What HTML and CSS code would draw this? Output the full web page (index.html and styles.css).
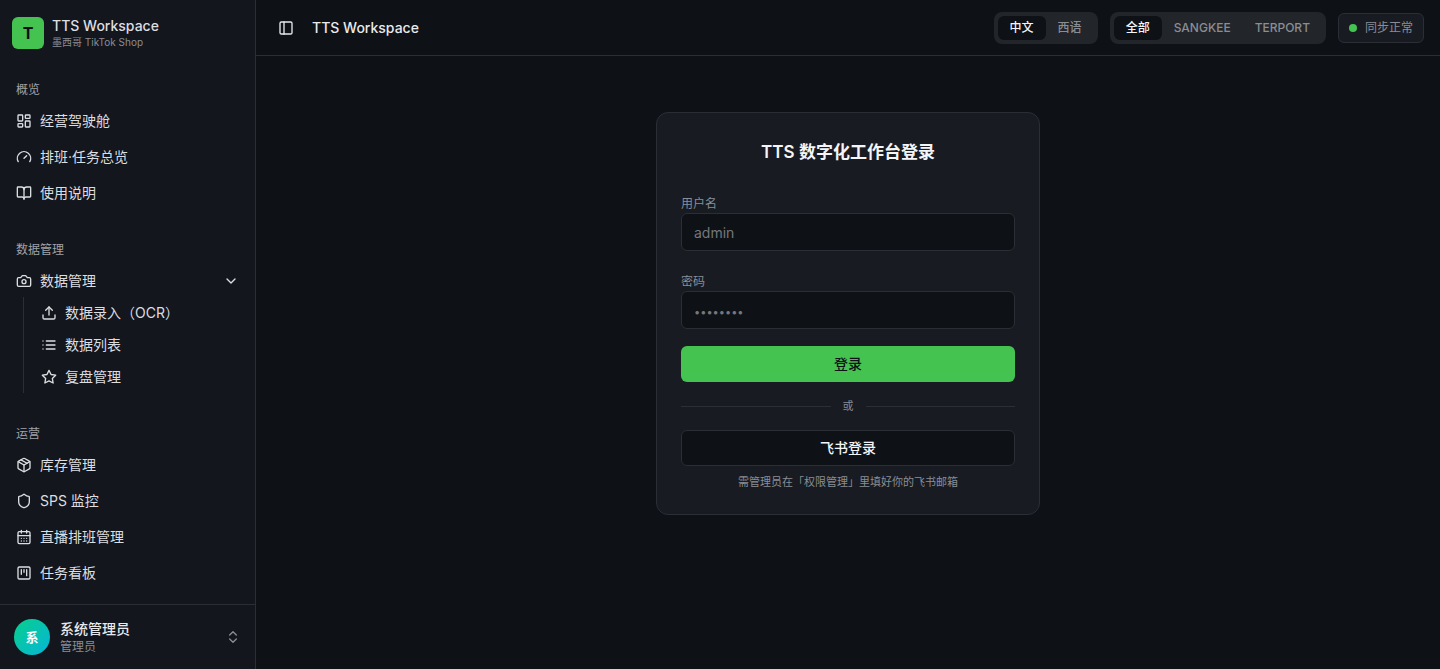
FILE: index.html
```html
<!DOCTYPE html>
<html lang="zh-CN">
<head>
    <meta charset="UTF-8">
    <meta name="viewport" content="width=device-width, initial-scale=1.0">
    <title>TTS Workspace</title>
    <link rel="stylesheet" href="styles.css">
</head>
<body>
    <!-- sidebar -->
    <aside class="sidebar">
        <div class="brand">
            <div class="brand-logo">T</div>
            <div>
                <div class="brand-name">TTS Workspace</div>
                <div class="brand-sub">墨西哥 TikTok Shop</div>
            </div>
        </div>

        <nav class="nav">
            <div class="nav-group">
                <div class="nav-label">概览</div>
                <a class="nav-item" href="#">
                    <svg class="icon" viewBox="0 0 24 24"><rect x="3" y="3" width="7" height="9" rx="1"/><rect x="14" y="3" width="7" height="5" rx="1"/><rect x="14" y="12" width="7" height="9" rx="1"/><rect x="3" y="16" width="7" height="5" rx="1"/></svg>
                    <span>经营驾驶舱</span>
                </a>
                <a class="nav-item" href="#">
                    <svg class="icon" viewBox="0 0 24 24"><path d="m12 14 4-4"/><path d="M3.34 19a10 10 0 1 1 17.32 0"/></svg>
                    <span>排班·任务总览</span>
                </a>
                <a class="nav-item" href="#">
                    <svg class="icon" viewBox="0 0 24 24"><path d="M12 7v14"/><path d="M3 18a1 1 0 0 1-1-1V4a1 1 0 0 1 1-1h5a4 4 0 0 1 4 4 4 4 0 0 1 4-4h5a1 1 0 0 1 1 1v13a1 1 0 0 1-1 1h-6a3 3 0 0 0-3 3 3 3 0 0 0-3-3z"/></svg>
                    <span>使用说明</span>
                </a>
            </div>

            <div class="nav-group">
                <div class="nav-label">数据管理</div>
                <button class="nav-item" type="button" aria-expanded="true">
                    <svg class="icon" viewBox="0 0 24 24"><path d="M14.5 4h-5L7 7H4a2 2 0 0 0-2 2v9a2 2 0 0 0 2 2h16a2 2 0 0 0 2-2V9a2 2 0 0 0-2-2h-3l-2.5-3z"/><circle cx="12" cy="13" r="3"/></svg>
                    <span>数据管理</span>
                    <svg class="icon nav-arrow" viewBox="0 0 24 24"><path d="m6 9 6 6 6-6"/></svg>
                </button>
                <div class="nav-sub">
                    <a class="nav-item" href="#">
                        <svg class="icon" viewBox="0 0 24 24"><path d="M21 15v4a2 2 0 0 1-2 2H5a2 2 0 0 1-2-2v-4"/><path d="m17 8-5-5-5 5"/><path d="M12 3v12"/></svg>
                        <span>数据录入（OCR）</span>
                    </a>
                    <a class="nav-item" href="#">
                        <svg class="icon" viewBox="0 0 24 24"><path d="M3 12h.01M3 18h.01M3 6h.01M8 12h13M8 18h13M8 6h13"/></svg>
                        <span>数据列表</span>
                    </a>
                    <a class="nav-item" href="#">
                        <svg class="icon" viewBox="0 0 24 24"><path d="m12 2 3.09 6.26L22 9.27l-5 4.87 1.18 6.88L12 17.77l-6.18 3.25L7 14.14 2 9.27l6.91-1.01z"/></svg>
                        <span>复盘管理</span>
                    </a>
                </div>
            </div>

            <div class="nav-group">
                <div class="nav-label">运营</div>
                <a class="nav-item" href="#">
                    <svg class="icon" viewBox="0 0 24 24"><path d="M11 21.73a2 2 0 0 0 2 0l7-4A2 2 0 0 0 21 16V8a2 2 0 0 0-1-1.73l-7-4a2 2 0 0 0-2 0l-7 4A2 2 0 0 0 3 8v8a2 2 0 0 0 1 1.73z"/><path d="M12 22V12"/><path d="m3.3 7 8.7 5 8.7-5"/><path d="m7.5 4.27 9 5.15"/></svg>
                    <span>库存管理</span>
                </a>
                <a class="nav-item" href="#">
                    <svg class="icon" viewBox="0 0 24 24"><path d="M20 13c0 5-3.5 7.5-7.66 8.95a1 1 0 0 1-.67-.01C7.5 20.5 4 18 4 13V6a1 1 0 0 1 1-1c2 0 4.5-1.2 6.24-2.72a1.17 1.17 0 0 1 1.52 0C14.51 3.81 17 5 19 5a1 1 0 0 1 1 1z"/></svg>
                    <span>SPS 监控</span>
                </a>
                <a class="nav-item" href="#">
                    <svg class="icon" viewBox="0 0 24 24"><path d="M8 2v4M16 2v4"/><rect x="3" y="4" width="18" height="18" rx="2"/><path d="M3 10h18M8 14h.01M12 14h.01M16 14h.01M8 18h.01M12 18h.01M16 18h.01"/></svg>
                    <span>直播排班管理</span>
                </a>
                <a class="nav-item" href="#">
                    <svg class="icon" viewBox="0 0 24 24"><rect x="3" y="3" width="18" height="18" rx="2"/><path d="M8 7v7M12 7v4M16 7v9"/></svg>
                    <span>任务看板</span>
                </a>
            </div>
        </nav>

        <button class="user" type="button">
            <span class="avatar">系</span>
            <span class="user-info">
                <span class="user-name">系统管理员</span>
                <span class="user-role">管理员</span>
            </span>
            <svg class="icon" viewBox="0 0 24 24"><path d="m7 15 5 5 5-5"/><path d="m7 9 5-5 5 5"/></svg>
        </button>
    </aside>

    <div class="page">
        <!-- top bar -->
        <header class="topbar">
            <button class="toggle" type="button" aria-label="切换侧边栏">
                <svg class="icon" viewBox="0 0 24 24"><rect x="3" y="3" width="18" height="18" rx="2"/><path d="M9 3v18"/></svg>
            </button>
            <h1 class="topbar-title">TTS Workspace</h1>
            <div class="segment">
                <button class="segment-btn active" type="button">中文</button>
                <button class="segment-btn" type="button">西语</button>
            </div>
            <div class="segment">
                <button class="segment-btn active" type="button">全部</button>
                <button class="segment-btn" type="button">SANGKEE</button>
                <button class="segment-btn" type="button">TERPORT</button>
            </div>
            <div class="status"><span class="status-dot"></span>同步正常</div>
        </header>

        <!-- login -->
        <main class="content">
            <form class="card">
                <h2 class="card-title">TTS 数字化工作台登录</h2>
                <div class="form-group">
                    <label for="username">用户名</label>
                    <input id="username" type="text" placeholder="admin">
                </div>
                <div class="form-group">
                    <label for="password">密码</label>
                    <input id="password" type="password" placeholder="••••••••">
                </div>
                <button class="btn btn-primary" type="submit">登录</button>
                <div class="divider">或</div>
                <button class="btn btn-outline" type="button">飞书登录</button>
                <p class="hint">需管理员在「权限管理」里填好你的飞书邮箱</p>
            </form>
        </main>
    </div>
</body>
</html>
```

FILE: styles.css
```css
* {
    box-sizing: border-box;
}
body {
    display: flex;
    height: 100vh;
    margin: 0;
    font-family: Inter, "Noto Sans CJK SC", sans-serif;
    font-size: 14px;
    line-height: 20px;
    color: #e8eaed;
    background-color: #0e1116;
}
button, input {
    font: inherit;
    color: inherit;
}
button {
    padding: 0;
    border: none;
    background: none;
    cursor: pointer;
}
.icon {
    width: 16px;
    height: 16px;
    flex-shrink: 0;
    fill: none;
    stroke: currentColor;
    stroke-width: 2;
    stroke-linecap: round;
    stroke-linejoin: round;
}

/* Sidebar */
.sidebar {
    display: flex;
    flex-direction: column;
    width: 256px;
    flex-shrink: 0;
    border-right: 1px solid #2b2e35;
    background-color: #13161d;
}
.brand {
    display: flex;
    align-items: center;
    gap: 8px;
    padding: 17px 12px 16px;
}
.brand-logo {
    width: 32px;
    height: 32px;
    border-radius: 6px;
    background-color: #45c351;
    color: #0e1116;
    font-size: 16px;
    font-weight: 700;
    line-height: 32px;
    text-align: center;
}
.brand-name {
    font-weight: 500;
    line-height: 18px;
    color: #dcdee2;
}
.brand-sub {
    font-size: 10px;
    line-height: 14px;
    color: #8a8d94;
}
.nav {
    display: flex;
    flex: 1;
    flex-direction: column;
    gap: 8px;
    min-height: 0;
    overflow: hidden;
}
.nav-group {
    display: flex;
    flex-direction: column;
    flex-shrink: 0;
    gap: 4px;
    padding: 8px;
}
.nav-label {
    height: 32px;
    margin-bottom: -4px;
    padding: 0 8px;
    font-size: 12px;
    line-height: 34px;
    color: #a0a2a7;
}
.nav-item {
    display: flex;
    align-items: center;
    gap: 8px;
    height: 32px;
    padding: 0 8px;
    border-radius: 6px;
    color: #dcdee2;
    text-decoration: none;
}
.nav-item:hover {
    background-color: #22252b;
}
.nav-arrow {
    margin-left: auto;
}
.nav-sub {
    display: flex;
    flex-direction: column;
    gap: 4px;
    margin: -4px 0 0 15px;
    padding: 2px 0 2px 9px;
    border-left: 1px solid #2b2e35;
}
.nav-sub .nav-item {
    height: 28px;
}
.user {
    display: flex;
    align-items: center;
    gap: 10px;
    padding: 14px;
    border-top: 1px solid #2b2e35;
    color: #8a8d94;
    text-align: left;
}
.avatar {
    width: 36px;
    height: 36px;
    border-radius: 50%;
    background-image: linear-gradient(135deg, #08cf8c, #06b6d8);
    color: #fff;
    font-size: 13px;
    font-weight: 600;
    line-height: 36px;
    text-align: center;
}
.user-info {
    display: flex;
    flex: 1;
    flex-direction: column;
}
.user-name {
    font-weight: 500;
    color: #e8eaed;
}
.user-role {
    font-size: 12px;
    line-height: 16px;
}

/* Top bar */
.page {
    display: flex;
    flex: 1;
    flex-direction: column;
    min-width: 0;
}
.topbar {
    display: flex;
    align-items: center;
    gap: 12px;
    height: 56px;
    padding: 0 16px;
    border-bottom: 1px solid #2b2e35;
}
.toggle {
    display: flex;
    align-items: center;
    justify-content: center;
    width: 28px;
    height: 28px;
}
.topbar-title {
    margin: 0 auto 0 0;
    font-size: 14px;
    font-weight: 500;
}
.segment {
    display: flex;
    padding: 4px;
    border-radius: 8px;
    background-color: #22252a;
}
.segment-btn {
    padding: 4px 12px;
    border-radius: 6px;
    font-size: 12px;
    font-weight: 500;
    line-height: 16px;
    color: #8a8d94;
}
.segment-btn.active {
    background-color: #0e1116;
    color: #f4f5f7;
}
.status {
    display: flex;
    align-items: center;
    gap: 8px;
    padding: 6px 10px;
    border: 1px solid #2b2e35;
    border-radius: 6px;
    background-color: #181b22;
    font-size: 12px;
    line-height: 16px;
    color: #8a8d94;
}
.status-dot {
    width: 8px;
    height: 8px;
    border-radius: 50%;
    background-color: #45c351;
}

/* Login card */
.content {
    display: flex;
    flex: 1;
    align-items: flex-start;
    justify-content: center;
    padding: 56px 24px;
}
.card {
    display: flex;
    flex-direction: column;
    width: 100%;
    max-width: 384px;
    padding: 24px;
    border: 1px solid #2b2e35;
    border-radius: 12px;
    background-color: #181b22;
}
.card-title {
    margin: 0 0 28px;
    font-size: 17px;
    font-weight: 600;
    line-height: 30px;
    text-align: center;
    color: #f4f5f7;
}
.form-group {
    display: flex;
    flex-direction: column;
    margin-bottom: 22px;
}
.form-group + .form-group {
    margin-bottom: 17px;
}
label {
    font-size: 12px;
    line-height: 18px;
    color: #8a8d94;
}
input {
    width: 100%;
    height: 38px;
    padding: 0 12px;
    border: 1px solid #2b2e35;
    border-radius: 6px;
    background-color: #0e1116;
}
input::placeholder {
    color: #75777c;
}
input[type="password"]::placeholder {
    font-size: 11px;
}
.btn {
    height: 36px;
    border-radius: 6px;
    font-weight: 500;
}
.btn-primary {
    background-color: #45c351;
    color: #0e1116;
}
.btn-outline {
    border: 1px solid #2b2e35;
    background-color: #0e1116;
    color: #f4f5f7;
}
.divider {
    display: flex;
    align-items: center;
    gap: 12px;
    margin: 16px 0;
    font-size: 11px;
    line-height: 16px;
    color: #8a8d94;
}
.divider::before, .divider::after {
    content: "";
    flex: 1;
    height: 1px;
    background-color: #2b2e35;
}
.hint {
    margin: 8px 0 0;
    font-size: 11px;
    line-height: 16px;
    text-align: center;
    color: #8a8d94;
}
```
